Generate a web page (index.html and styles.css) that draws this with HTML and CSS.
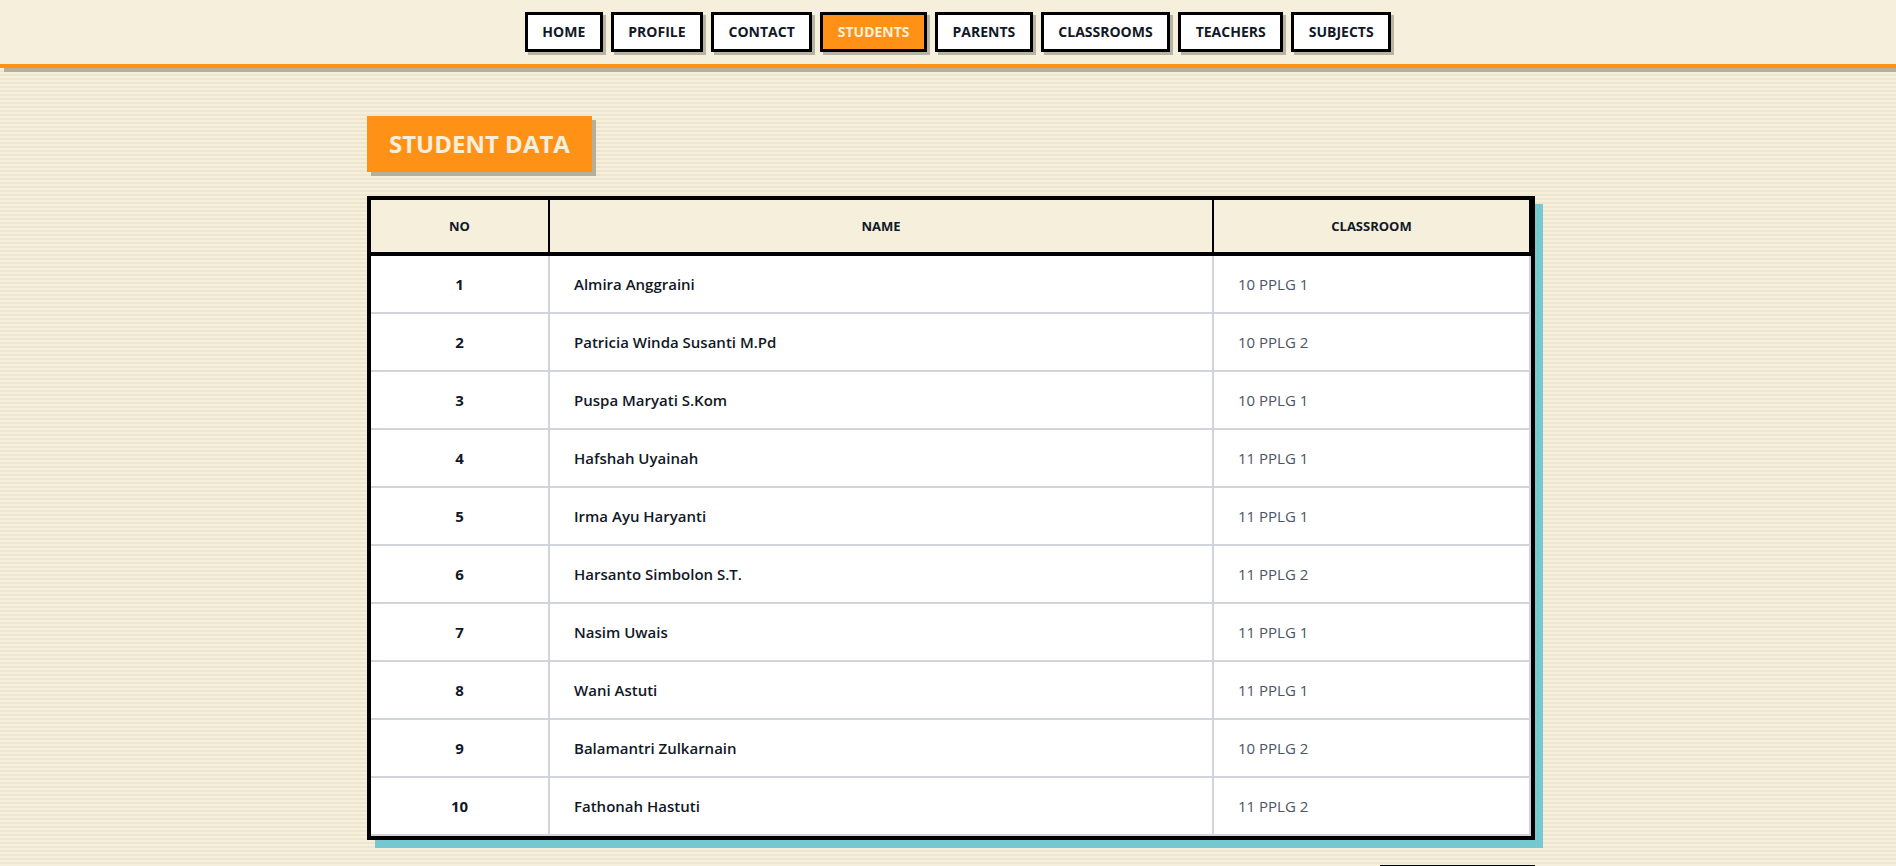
FILE: index.html
```html
<!DOCTYPE html>
<html lang="en">
<head>
<meta charset="utf-8">
<title>Student Data</title>
<link rel="stylesheet" href="styles.css">
</head>
<body>
<header class="topbar">
  <nav class="nav">
    <a class="nav-btn" href="#">HOME</a>
    <a class="nav-btn" href="#">PROFILE</a>
    <a class="nav-btn" href="#">CONTACT</a>
    <a class="nav-btn is-active" href="#">STUDENTS</a>
    <a class="nav-btn" href="#">PARENTS</a>
    <a class="nav-btn" href="#">CLASSROOMS</a>
    <a class="nav-btn" href="#">TEACHERS</a>
    <a class="nav-btn" href="#">SUBJECTS</a>
  </nav>
</header>
<main class="main">
  <h1 class="page-title">STUDENT DATA</h1>
  <table class="data-table">
    <thead>
      <tr>
        <th class="col-no">NO</th>
        <th class="col-name">NAME</th>
        <th class="col-class">CLASSROOM</th>
      </tr>
    </thead>
    <tbody>
      <tr><td class="cell-no">1</td><td class="cell-name">Almira Anggraini</td><td class="cell-class">10 PPLG 1</td></tr>
      <tr><td class="cell-no">2</td><td class="cell-name">Patricia Winda Susanti M.Pd</td><td class="cell-class">10 PPLG 2</td></tr>
      <tr><td class="cell-no">3</td><td class="cell-name">Puspa Maryati S.Kom</td><td class="cell-class">10 PPLG 1</td></tr>
      <tr><td class="cell-no">4</td><td class="cell-name">Hafshah Uyainah</td><td class="cell-class">11 PPLG 1</td></tr>
      <tr><td class="cell-no">5</td><td class="cell-name">Irma Ayu Haryanti</td><td class="cell-class">11 PPLG 1</td></tr>
      <tr><td class="cell-no">6</td><td class="cell-name">Harsanto Simbolon S.T.</td><td class="cell-class">11 PPLG 2</td></tr>
      <tr><td class="cell-no">7</td><td class="cell-name">Nasim Uwais</td><td class="cell-class">11 PPLG 1</td></tr>
      <tr><td class="cell-no">8</td><td class="cell-name">Wani Astuti</td><td class="cell-class">11 PPLG 1</td></tr>
      <tr><td class="cell-no">9</td><td class="cell-name">Balamantri Zulkarnain</td><td class="cell-class">10 PPLG 2</td></tr>
      <tr><td class="cell-no">10</td><td class="cell-name">Fathonah Hastuti</td><td class="cell-class">11 PPLG 2</td></tr>
    </tbody>
  </table>
  <div class="pager">
    <a class="pager-btn" href="#">NEXT PAGE</a>
  </div>
</main>
</body>
</html>
```

FILE: styles.css
```css
* { box-sizing: border-box; }

html, body {
  margin: 0;
  padding: 0;
}

body {
  font-family: "Open Sans", "Noto Sans", sans-serif;
  color: #111827;
  background: repeating-linear-gradient(180deg, #f5efdc 0 2px, #efe6cf 2px 4px);
  min-height: 100vh;
}

.topbar {
  background: #f5efdc;
  border-bottom: 4px solid #ff9116;
  box-shadow: 4px 4px 0 #b3b0a0;
}

.nav {
  display: flex;
  justify-content: center;
  gap: 8px;
  padding: 12px 0 12px 20px;
}

.nav-btn {
  display: block;
  height: 40px;
  line-height: 34px;
  padding: 0 14.5px;
  border: 3px solid #000;
  background: #fff;
  color: #111827;
  font-size: 14px;
  font-weight: 700;
  text-decoration: none;
  box-shadow: 3px 3px 0 #b8b4a4;
}

.nav-btn.is-active {
  background: #ff9116;
  color: #f5efdc;
}

.main {
  width: 1168px;
  margin: 48px auto 0;
  position: relative;
  left: 3px;
  padding-bottom: 40px;
}

.page-title {
  display: inline-block;
  margin: 0 0 24px;
  height: 56px;
  line-height: 56px;
  padding: 0 22px;
  background: #ff9116;
  color: #f5efdc;
  font-size: 24px;
  font-weight: 700;
  box-shadow: 4px 4px 0 #b3b0a0;
}

.data-table {
  width: 100%;
  table-layout: fixed;
  border-collapse: separate;
  border-spacing: 0;
  border: 4px solid #000;
  background: #fff;
  box-shadow: 8px 8px 0 #76c8d0;
}

.data-table th {
  background: #f5efdc;
  border-right: 2px solid #000;
  border-bottom: 4px solid #000;
  padding: 16px 24px;
  font-size: 13px;
  line-height: 20px;
  font-weight: 700;
  text-align: center;
  color: #111827;
}

.col-no { width: 179px; }
.col-name { width: 664px; }

.data-table td {
  border-right: 2px solid #d1d5db;
  border-bottom: 2px solid #d1d5db;
  padding: 16px 24px;
  font-size: 15px;
  line-height: 24px;
}

.cell-no {
  text-align: center;
  font-weight: 700;
  color: #111827;
}

.cell-name {
  font-weight: 600;
  color: #111827;
}

.cell-class {
  font-weight: 400;
  color: #4b5563;
}

.pager {
  display: flex;
  justify-content: flex-end;
  margin-top: 25px;
}

.pager-btn {
  display: block;
  width: 155px;
  padding: 14px 0 12px;
  line-height: 20px;
  border: 3px solid #000;
  background: #fff;
  color: #111827;
  text-align: center;
  font-size: 13px;
  font-weight: 700;
  text-decoration: none;
}
```
